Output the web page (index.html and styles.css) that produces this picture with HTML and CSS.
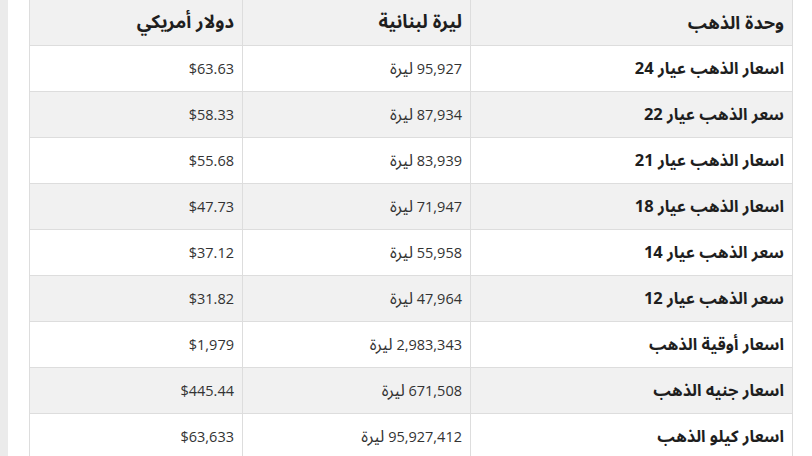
FILE: index.html
```html
<!DOCTYPE html>
<html lang="ar">
<head>
<meta charset="utf-8">
<link rel="stylesheet" href="styles.css">
</head>
<body>
<div class="page">
  <div class="strip"></div>
  <div class="content">
    <table class="prices" dir="rtl">
      <thead>
        <tr><th class="c1">وحدة الذهب</th><th class="c2">ليرة لبنانية</th><th class="c3">دولار أمريكي</th></tr>
      </thead>
      <tbody>
        <tr><td class="name">اسعار الذهب عيار 24</td><td>95,927 <span class="cur">ليرة</span></td><td>$63.63</td></tr>
        <tr><td class="name">سعر الذهب عيار 22</td><td>87,934 <span class="cur">ليرة</span></td><td>$58.33</td></tr>
        <tr><td class="name">اسعار الذهب عيار 21</td><td>83,939 <span class="cur">ليرة</span></td><td>$55.68</td></tr>
        <tr><td class="name">اسعار الذهب عيار 18</td><td>71,947 <span class="cur">ليرة</span></td><td>$47.73</td></tr>
        <tr><td class="name">سعر الذهب عيار 14</td><td>55,958 <span class="cur">ليرة</span></td><td>$37.12</td></tr>
        <tr><td class="name">سعر الذهب عيار 12</td><td>47,964 <span class="cur">ليرة</span></td><td>$31.82</td></tr>
        <tr><td class="name">اسعار أوقية الذهب</td><td>2,983,343 <span class="cur">ليرة</span></td><td>$1,979</td></tr>
        <tr><td class="name">اسعار جنيه الذهب</td><td>671,508 <span class="cur">ليرة</span></td><td>$445.44</td></tr>
        <tr><td class="name">اسعار كيلو الذهب</td><td>95,927,412 <span class="cur">ليرة</span></td><td>$63,633</td></tr>
      </tbody>
    </table>
  </div>
</div>
</body>
</html>
```

FILE: styles.css
```css
html, body {
  margin: 0;
  padding: 0;
  background: #ffffff;
  overflow: hidden;
}
.page {
  display: flex;
  height: 456px;
}
.strip {
  width: 8px;
  flex: none;
  background: #ebebeb;
}
.content {
  flex: none;
  padding-left: 21px;
}
.prices {
  width: 764px;
  border-collapse: collapse;
  margin-top: -1px;
  font-family: "Open Sans", "Noto Sans Arabic", "Noto Sans", "DejaVu Sans", sans-serif;
  font-size: 14.5px;
  color: #222222;
  table-layout: fixed;
}
.prices th, .prices td {
  border: 1px solid #dddddd;
  padding: 0 8px;
  text-align: right;
  vertical-align: middle;
}
.prices th {
  height: 45px;
  background: #f1f1f1;
  font-weight: 700;
  font-size: 18.5px;
  color: #1e1e1e;
}
.prices th.c1 {
  font-size: 18px;
}
.prices td {
  height: 45px;
  color: #333333;
}
.prices tbody tr:nth-child(even) td {
  background: #f1f1f1;
}
.prices td.name {
  font-weight: 700;
  font-size: 16.5px;
  color: #1e1e1e;
}
.cur {
  font-size: 16.5px;
}
.c1 { width: 305px; }
.c2 { width: 211px; }
.c3 { width: 196px; }
```
